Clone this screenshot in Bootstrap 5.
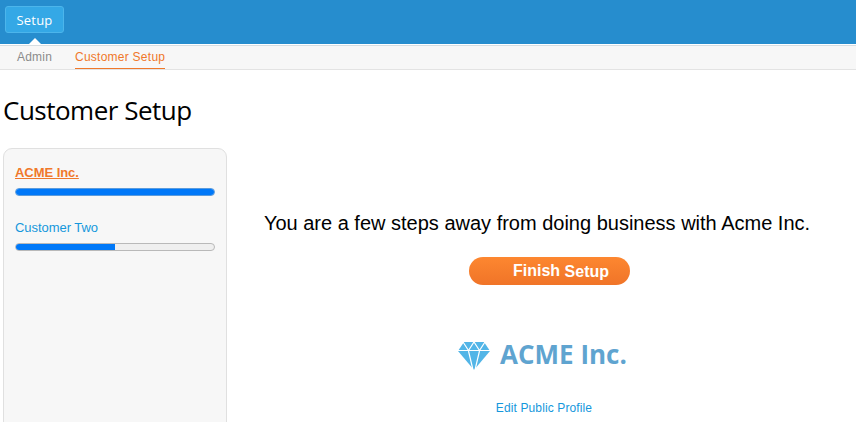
<!DOCTYPE html>
<html lang="en">
<head>
<meta charset="utf-8">
<title>Customer Setup</title>
<meta name="viewport" content="width=device-width, initial-scale=1">
<link href="https://cdn.jsdelivr.net/npm/bootstrap@5.3.0/dist/css/bootstrap.min.css" rel="stylesheet">
<script src="https://cdn.jsdelivr.net/npm/bootstrap@5.3.0/dist/js/bootstrap.bundle.min.js" defer></script>
<style>
body { font-family: "Liberation Sans", Arial, sans-serif; color: #000; height: 422px; overflow: hidden; }
a { color: #1597dc; }
.top-bar { height: 44px; background: #268dce; padding: 6px 5px 0; }
.btn-setup { position: relative; width: 59px; height: 27px; padding: 0; font: 13px/26px "Open Sans", sans-serif; letter-spacing: .2px; color: #fff; background: #34a8e6; border: 1px solid #4cb5eb; border-radius: 3px; }
.btn-setup::after { content: ""; position: absolute; left: 22.5px; top: 31px; border: 6px solid transparent; border-top: 0; border-bottom-color: #fff; }
.sub-bar { height: 26px; background: #f7f7f7; border-top: 1px solid #fff; border-bottom: 1px solid #e3e3e3; box-shadow: inset 0 1px #d5dde2; padding-left: 17px; gap: 23px; font-size: 12px; }
.sub-bar a { color: #8b8b8b; line-height: 25px; height: 24px; letter-spacing: .2px; }
.sub-bar a.active { color: #f0782a; border-bottom: 1px solid #f0782a; letter-spacing: .25px; }
.page-title { font: 26px/36px "Open Sans", sans-serif; letter-spacing: -.5px; margin: 22px 0 0 3px; }
.side-panel { width: 224px; height: 290px; margin: 20px 0 0 3px; padding: 15px 11px; background: #f7f7f7; border: 1px solid #e0e0e0; border-radius: 9px; font-size: 13px; }
.side-panel a { line-height: 18px; letter-spacing: -.05px; }
.side-panel a.current { color: #f0782a; }
.meter { height: 8px; margin: 6px 0 23px; background: #efefef; border: 1px solid #b9b9b9; border-radius: 4px; }
.meter .progress-bar { background: #0078f8; }
.meter.full { border-color: #5b9bdc; }
.intro { font-size: 20px; line-height: 24px; margin: 83px 9px 0 0; white-space: nowrap; }
.btn-finish { width: 161px; height: 28px; margin: 22px 0 0 16px; padding: 0 0 0 23px; color: #fff !important; font-size: 16px; font-weight: 700; line-height: 30px; border: 0; border-radius: 14px; background: linear-gradient(#fd8730, #f07428); }
.first-word { margin-top: -1px; }
.logo-name { font: 700 26px/34px "Open Sans", sans-serif; color: #5fa4d0; margin-top: -2px; }
.brand-row { margin: 53px 0 0 2px; gap: 10px; height: 34px; }
.gem { margin-top: 2px; }
.edit-link { font-size: 12px; line-height: 18px; margin: 27px 0 0 5px; letter-spacing: .12px; }
</style>
</head>
<body>
<header class="top-bar"><a class="btn btn-setup" href="#">Setup</a></header>
<nav class="sub-bar d-flex">
<a class="text-decoration-none" href="#">Admin</a>
<a class="text-decoration-none active" href="#">Customer Setup</a>
</nav>
<h1 class="page-title">Customer Setup</h1>
<div class="d-flex">
<aside class="side-panel flex-shrink-0">
<a class="current fw-bold d-block" href="#">ACME Inc.</a>
<div class="progress meter full"><div class="progress-bar w-100"></div></div>
<a class="text-decoration-none d-block" href="#">Customer Two</a>
<div class="progress meter"><div class="progress-bar w-50"></div></div>
</aside>
<main class="flex-grow-1 d-flex flex-column align-items-center">
<p class="intro">You are a few steps away from doing business with Acme Inc.</p>
<a class="btn btn-finish d-flex justify-content-center" href="#"><span class="first-word">Finish</span><span>&nbsp;Setup</span></a>
<div class="brand-row d-flex align-items-center">
<svg class="gem" width="32" height="28" viewBox="0 0 32 28"><path d="M6 0h20l6 9-16 19L0 9z" fill="#52b5e7"/><path d="M0 8.500h32M5 0l5.500 8.500L16 0l5.500 8.500L27 0M10.500 9l4.500 19M21.500 9l-4.500 19" fill="none" stroke="#fff" stroke-width="1.200"/></svg>
<span class="logo-name">ACME Inc.</span>
</div>
<a class="edit-link text-decoration-none" href="#">Edit Public Profile</a>
</main>
</div>
</body>
</html>
